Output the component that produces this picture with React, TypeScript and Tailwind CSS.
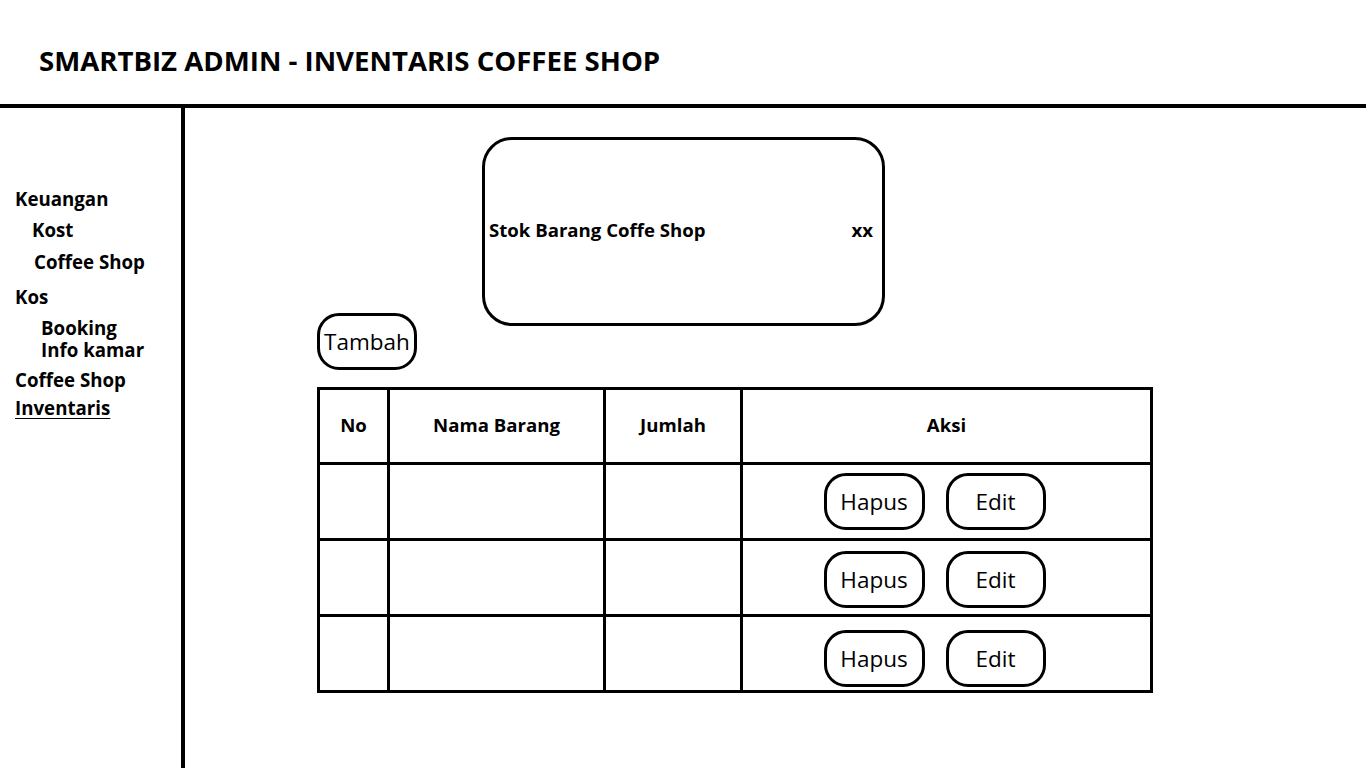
import React from "react";

const font = { fontFamily: '"Open Sans", "Noto Sans", sans-serif' };

function Pill({ children, w = "w-[101px]" }: { children: React.ReactNode; w?: string }) {
  return (
    <div
      className={`${w} h-[57px] border-[3px] border-black rounded-[22px] flex items-center justify-center text-[22.5px] text-black`}
    >
      {children}
    </div>
  );
}

export default function App() {
  const rows = ["pt-0", "pt-[4px]", "pt-[10px]"];
  return (
    <div className="w-[1366px] h-[768px] bg-white overflow-hidden text-black" style={font}>
      <header className="h-[108px] border-b-[4px] border-black flex items-center pl-[39px] pt-[18px]">
        <h1 className="text-[27.6px] font-bold leading-none">SMARTBIZ ADMIN - INVENTARIS COFFEE SHOP</h1>
      </header>
      <div className="flex h-[660px]">
        <aside className="w-[185px] shrink-0 border-r-[4px] border-black pt-[80px] text-[18.7px] font-bold leading-[22px]">
          <div className="pl-[15px]">Keuangan</div>
          <div className="pl-[32px] mt-[9px]">Kost</div>
          <div className="pl-[34px] mt-[10px]">Coffee Shop</div>
          <div className="pl-[15px] mt-[13px]">Kos</div>
          <div className="pl-[41px] mt-[9px]">Booking</div>
          <div className="pl-[41px]">Info kamar</div>
          <div className="pl-[15px] mt-[8px]">Coffee Shop</div>
          <div className="pl-[15px] mt-[6px] underline underline-offset-[3px]">Inventaris</div>
        </aside>
        <main className="flex-1 flex flex-col">
          <div className="ml-[297px] mt-[29px] w-[403px] h-[189px] border-[3px] border-black rounded-[30px] flex items-center justify-between pl-[4px] pr-[9px] pb-[4px] text-[18.6px] font-bold">
            <span>Stok Barang Coffe Shop</span>
            <span>xx</span>
          </div>
          <div className="ml-[132px] -mt-[13px]">
            <Pill w="w-[100px]">Tambah</Pill>
          </div>
          <table className="ml-[132px] mt-[17px] border-collapse border-[3px] border-black w-[836px]">
            <colgroup>
              <col className="w-[70px]" />
              <col className="w-[216px]" />
              <col className="w-[137px]" />
              <col />
            </colgroup>
            <thead>
              <tr className="h-[75px] text-[18.6px] font-bold">
                <th className="border-[3px] border-black pb-[2px]">No</th>
                <th className="border-[3px] border-black pb-[2px]">Nama Barang</th>
                <th className="border-[3px] border-black pb-[2px]">Jumlah</th>
                <th className="border-[3px] border-black pb-[2px]">Aksi</th>
              </tr>
            </thead>
            <tbody>
              {rows.map((pt, i) => (
                <tr key={i} className="h-[76px]">
                  <td className="border-[3px] border-black"></td>
                  <td className="border-[3px] border-black"></td>
                  <td className="border-[3px] border-black"></td>
                  <td className="border-[3px] border-black">
                    <div className={`flex items-center justify-center gap-[21px] pr-[24px] ${pt}`}>
                      <Pill>Hapus</Pill>
                      <Pill w="w-[100px]">Edit</Pill>
                    </div>
                  </td>
                </tr>
              ))}
            </tbody>
          </table>
        </main>
      </div>
    </div>
  );
}
